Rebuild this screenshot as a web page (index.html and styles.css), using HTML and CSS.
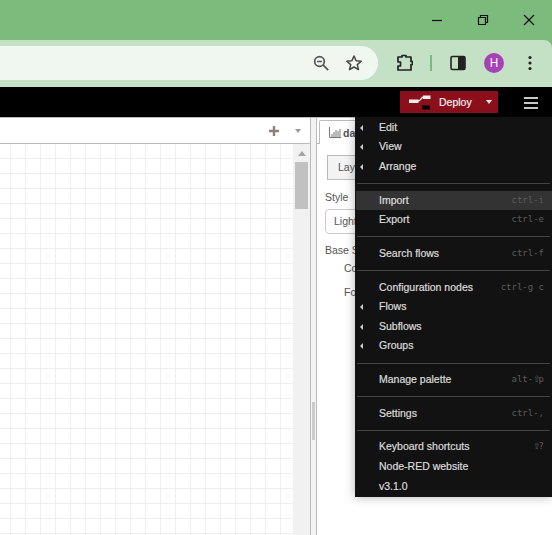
FILE: index.html
```html
<!DOCTYPE html>
<html lang="en">
<head>
  <meta charset="UTF-8">
  <title>Node-RED</title>
  <link rel="stylesheet" href="styles.css">
</head>
<body>
  <div class="titlebar">
    <div class="win-btn">
      <svg width="12" height="12" viewBox="0 0 12 12"><path d="M1 6.500h10" stroke="#111" stroke-width="1.200" fill="none"/></svg>
    </div>
    <div class="win-btn">
      <svg width="12" height="12" viewBox="0 0 12 12"><path d="M1.500 3.500h7v7h-7zM3.500 3.500v-2h7v7h-2" stroke="#111" stroke-width="1.200" fill="none"/></svg>
    </div>
    <div class="win-btn">
      <svg width="12" height="12" viewBox="0 0 12 12"><path d="M1 1l10 10M11 1L1 11" stroke="#111" stroke-width="1.200" fill="none"/></svg>
    </div>
  </div>

  <div class="toolbar">
    <div class="omnibox">
      <div class="omni-icon">
        <svg width="18" height="18" viewBox="0 0 18 18"><circle cx="7.500" cy="7.500" r="4.800" stroke="#555" stroke-width="1.700" fill="none"/><path d="M5 7.500h5M11.200 11.200l5 5" stroke="#555" stroke-width="1.700" fill="none"/></svg>
      </div>
      <div class="omni-icon">
        <svg width="18" height="18" viewBox="0 0 18 18"><path d="M9 2l2.100 4.700 5.100.5-3.900 3.400 1.200 5L9 13l-4.500 2.600 1.200-5-3.900-3.400 5.100-.5z" stroke="#444" stroke-width="1.500" fill="none" stroke-linejoin="round"/></svg>
      </div>
    </div>
    <div class="tool-icon">
      <svg width="18" height="18" viewBox="0 0 18 18"><path d="M3 3h4V1.500h4V3h5v4.500h1.500v3H16V16H3v-4h2.500V8H3z" stroke="#222" stroke-width="1.700" fill="none" stroke-linejoin="round"/></svg>
    </div>
    <div class="tool-divider"><span></span></div>
    <div class="tool-icon">
      <svg width="16" height="16" viewBox="0 0 16 16"><rect x="1" y="1.500" width="14" height="13" rx="1.500" stroke="#222" stroke-width="1.600" fill="none"/><path d="M8 1.500h6a1 1 0 0 1 1 1v11a1 1 0 0 1-1 1H8z" fill="#222"/></svg>
    </div>
    <div class="tool-icon">
      <div class="avatar">H</div>
    </div>
    <div class="tool-icon">
      <svg width="4" height="16" viewBox="0 0 4 16"><circle cx="2" cy="2.500" r="1.600" fill="#222"/><circle cx="2" cy="8" r="1.600" fill="#222"/><circle cx="2" cy="13.500" r="1.600" fill="#222"/></svg>
    </div>
  </div>

  <div class="header">
    <div class="deploy">
      <svg class="deploy-icon" width="23" height="15" viewBox="0 0 23 15"><path d="M0 4.500h9.500v3.500H0zM14 .5h7.500v3.500H14z" fill="#eee"/><path d="M9 6c3 0 3-4 5.500-4" stroke="#eee" stroke-width="1.300" fill="none"/><path d="M13 10.500h8v4h-8z" fill="#000"/></svg>
      <span class="deploy-label">Deploy</span>
      <span class="deploy-caret"></span>
    </div>
    <div class="hamburger"><span></span><span></span><span></span></div>
  </div>

  <div class="main">
    <div class="workspace">
      <div class="ws-tabs">
        <svg width="10" height="10" viewBox="0 0 10 10"><path d="M5 0v10M0 5h10" stroke="#8d8078" stroke-width="2.400" fill="none"/></svg>
        <span class="ws-caret"></span>
      </div>
      <div class="ws-body">
        <div class="ws-grid"></div>
        <div class="scrollbar">
          <span class="scroll-up"></span>
          <span class="scroll-thumb"></span>
        </div>
      </div>
    </div>
    <div class="sash"><span class="sash-grip"></span></div>
    <div class="sidebar">
      <div class="side-tabs">
        <div class="side-tab">
          <svg width="12" height="11" viewBox="0 0 12 11"><path d="M.5 0v10.500H12M3 10V7M5 10V5M7 10V3M9 10V4M11 10V2" stroke="#777" fill="none"/></svg>
          <b>da</b>
        </div>
      </div>
      <div class="side-body">
        <div class="layout-tab">Lay</div>
        <div class="field-label">Style</div>
        <div class="select-box">Light</div>
        <div class="field-base">Base S</div>
        <div class="field-sub">Co</div>
        <div class="field-sub">Fo</div>
      </div>
    </div>
  </div>

  <div class="menu">
    <div class="menu-item sub"><span>Edit</span></div>
    <div class="menu-item sub"><span>View</span></div>
    <div class="menu-item sub"><span>Arrange</span></div>
    <div class="menu-sep"></div>
    <div class="menu-item active"><span>Import</span><kbd>ctrl-i</kbd></div>
    <div class="menu-item"><span>Export</span><kbd>ctrl-e</kbd></div>
    <div class="menu-sep"></div>
    <div class="menu-item"><span>Search flows</span><kbd>ctrl-f</kbd></div>
    <div class="menu-sep"></div>
    <div class="menu-item"><span>Configuration nodes</span><kbd>ctrl-g c</kbd></div>
    <div class="menu-item sub"><span>Flows</span></div>
    <div class="menu-item sub"><span>Subflows</span></div>
    <div class="menu-item sub"><span>Groups</span></div>
    <div class="menu-sep"></div>
    <div class="menu-item"><span>Manage palette</span><kbd>alt-<i class="shift">⇧</i>p</kbd></div>
    <div class="menu-sep"></div>
    <div class="menu-item"><span>Settings</span><kbd>ctrl-,</kbd></div>
    <div class="menu-sep"></div>
    <div class="menu-item"><span>Keyboard shortcuts</span><kbd><i class="shift">⇧</i>?</kbd></div>
    <div class="menu-item"><span>Node-RED website</span></div>
    <div class="menu-item"><span>v3.1.0</span></div>
  </div>
</body>
</html>
```

FILE: styles.css
```css
* {
  margin: 0;
  padding: 0;
  box-sizing: border-box;
}

html, body {
  height: 100%;
  overflow: hidden;
}

body {
  display: flex;
  flex-direction: column;
  font-family: "Liberation Sans", Arial, sans-serif;
  font-size: 10.5px;
  background: #7cbb7c;
}

.titlebar {
  height: 40px;
  display: flex;
  justify-content: flex-end;
  background: #7cbb7c;
  flex-shrink: 0;
}

.win-btn {
  width: 46px;
  height: 40px;
  display: flex;
  align-items: center;
  justify-content: center;
}

.toolbar {
  height: 47px;
  display: flex;
  align-items: center;
  padding-right: 4px;
  padding-bottom: 1px;
  background: #c5e1c5;
  border-top-right-radius: 8px;
  flex-shrink: 0;
}

.omnibox {
  width: 378px;
  height: 34px;
  margin-right: 8px;
  padding-right: 7.500px;
  display: flex;
  justify-content: flex-end;
  align-items: center;
  background: #f0f7f0;
  border-radius: 0 17px 17px 0;
}

.omni-icon {
  width: 33px;
  display: flex;
  justify-content: center;
}

.tool-icon {
  width: 36px;
  display: flex;
  justify-content: center;
  align-items: center;
}

.tool-divider {
  width: 18px;
  display: flex;
  justify-content: center;
}

.tool-divider span {
  width: 2px;
  height: 16px;
  background: #7cbb7c;
}

.avatar {
  width: 20px;
  height: 20px;
  border-radius: 50%;
  background: #a642b5;
  color: #fff;
  font-family: Roboto, sans-serif;
  font-size: 12px;
  line-height: 20px;
  text-align: center;
}

.header {
  height: 30px;
  display: flex;
  justify-content: flex-end;
  align-items: center;
  background: #000;
  flex-shrink: 0;
}

.deploy {
  width: 98px;
  height: 22px;
  display: flex;
  align-items: center;
  padding-left: 9px;
  background: #8c101c;
  color: #eee;
  -webkit-text-stroke: 0.2px #eee;
}

.deploy-icon {
  margin-right: 7px;
}

.deploy-label {
  width: 47px;
}

.deploy-caret {
  border-left: 3.500px solid transparent;
  border-right: 3.500px solid transparent;
  border-top: 4px solid #eee;
}

.hamburger {
  width: 54px;
  display: flex;
  flex-direction: column;
  align-items: center;
  gap: 3px;
  padding-left: 12px;
  padding-top: 1px;
}

.hamburger span {
  width: 14px;
  height: 2px;
  background: #c8c8c8;
}

.main {
  flex: 1;
  min-height: 0;
  display: flex;
  background: #fff;
  border-top: 1px solid #bbb;
}

.workspace {
  width: 310px;
  display: flex;
  flex-direction: column;
}

.ws-tabs {
  height: 26px;
  display: flex;
  justify-content: flex-end;
  align-items: center;
  gap: 16px;
  padding-right: 9px;
  border-bottom: 1px solid #bbb;
  flex-shrink: 0;
}

.ws-caret {
  border-left: 3.500px solid transparent;
  border-right: 3.500px solid transparent;
  border-top: 4px solid #999;
}

.ws-body {
  flex: 1;
  min-height: 0;
  display: flex;
}

.ws-grid {
  flex: 1;
  background-color: #fff;
  background-image:
    linear-gradient(to right, #eee 1px, transparent 1px),
    linear-gradient(to bottom, #eee 1px, transparent 1px);
  background-size: 15px 15px;
  background-position: 10px 14px;
}

.scrollbar {
  width: 17px;
  display: flex;
  flex-direction: column;
  align-items: center;
  background: #f1f1f1;
}

.scroll-up {
  margin-top: 7px;
  border-left: 4px solid transparent;
  border-right: 4px solid transparent;
  border-bottom: 5px solid #a3a3a3;
}

.scroll-thumb {
  width: 13px;
  height: 47px;
  margin-top: 6px;
  background: #c1c1c1;
}

.sash {
  width: 7px;
  display: flex;
  justify-content: center;
  padding-top: 284px;
  background: #f3f3f3;
  border-left: 1px solid #bbb;
  border-right: 1px solid #bbb;
}

.sash-grip {
  width: 3px;
  height: 38px;
  background: #ccc;
}

.sidebar {
  flex: 1;
  min-width: 0;
  overflow: hidden;
  color: #555;
  font-size: 10.500px;
}

.side-tabs {
  height: 26px;
  padding: 2px 0 0 2px;
  border-bottom: 1px solid #bbb;
}

.side-tab {
  height: 24px;
  width: 90px;
  display: flex;
  align-items: center;
  gap: 2px;
  padding-left: 9px;
  background: #fff;
  border: 1px solid #bbb;
  border-bottom: 0;
  border-radius: 2px 2px 0 0;
  white-space: nowrap;
}

.side-body {
  padding: 11px 0 0 8px;
  white-space: nowrap;
}

.layout-tab {
  width: 80px;
  height: 25px;
  margin: 0 0 11px 2px;
  padding-left: 10px;
  line-height: 23px;
  background: #f3f3f3;
  border: 1px solid #bbb;
}

.field-label {
  height: 12px;
  line-height: 12px;
  margin-bottom: 6px;
}

.select-box {
  width: 120px;
  height: 25px;
  padding-left: 8px;
  line-height: 23px;
  border: 1px solid #ccc;
  border-radius: 4px;
  margin-bottom: 10px;
}

.field-base {
  height: 12px;
  line-height: 12px;
}

.field-sub {
  height: 24px;
  line-height: 24px;
  padding-left: 19px;
}

.menu {
  position: absolute;
  top: 117px;
  left: 355px;
  width: 197px;
  height: 380px;
  padding-top: 0.800px;
  background: #121212;
  box-shadow: 0 0 10px rgba(0, 0, 0, 0.3);
  color: #ddd;
  -webkit-text-stroke: 0.2px #ddd;
}

.menu-item {
  position: relative;
  height: 19.600px;
  line-height: 19.600px;
  display: flex;
  justify-content: space-between;
  align-items: center;
  margin-left: 1px;
  padding: 0 8px 0 23px;
}

.menu-item.active {
  background: #333;
}

.menu-item.sub::before {
  content: "";
  position: absolute;
  left: 4px;
  top: 7px;
  border-top: 3px solid transparent;
  border-bottom: 3px solid transparent;
  border-right: 3px solid #ccc;
}

.menu-item kbd {
  font-family: "DejaVu Sans Mono", monospace;
  font-size: 9px;
  color: #5c5c5c;
  -webkit-text-stroke: 0;
}

.menu-item .shift {
  display: inline-block;
  width: 5.400px;
  font-family: "DejaVu Sans", sans-serif;
  font-style: normal;
  font-size: 9px;
  text-align: center;
}

.menu-sep {
  height: 1px;
  margin: 6.500px 2px 6.600px 2px;
  background: #444;
}
```
